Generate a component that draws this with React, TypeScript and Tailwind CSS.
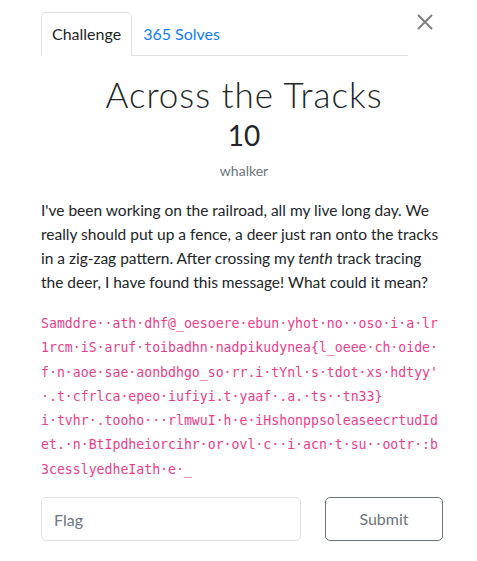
import React from "react";

const codeLines = [
  "Samddre··ath·dhf@_oesoere·ebun·yhot·no··oso·i·a·lr",
  "1rcm·iS·aruf·toibadhn·nadpikudynea{l_oeee·ch·oide·",
  "f·n·aoe·sae·aonbdhgo_so·rr.i·tYnl·s·tdot·xs·hdtyy'",
  "·.t·cfrlca·epeo·iufiyi.t·yaaf·.a.·ts··tn33}",
  "i·tvhr·.tooho···rlmwuI·h·e·iHshonppsoleaseecrtudId",
  "et.·n·BtIpdheiorcihr·or·ovl·c··i·acn·t·su··ootr·:b",
  "3cesslyedheIath·e·_",
];

export default function App() {
  return (
    <div className="w-[477px] h-[561px] bg-white font-['Lato',sans-serif] text-[#212529] overflow-hidden">
      <div className="pl-[41px] pr-[34px] pt-[12px]">
        {/* tabs row */}
        <div className="flex items-start">
          <div className="w-[367px] flex border-b border-[#dee2e6] h-[44px]">
            <div className="h-[44px] px-[10px] flex items-center border border-[#dee2e6] border-b-white rounded-t-[5px] text-[16px] text-[#212529] bg-white">
              Challenge
            </div>
            <div className="h-[44px] px-[11px] flex items-center text-[16px] text-[#117cf7]">
              365 Solves
            </div>
          </div>
          <div className="ml-[9px] mt-[2px] w-[16px] h-[16px]">
            <svg width="16" height="16" viewBox="0 0 16 16">
              <path d="M1 1 L15 15 M15 1 L1 15" stroke="#7f7f7f" strokeWidth="2" fill="none" />
            </svg>
          </div>
        </div>

        {/* title */}
        <div className="text-center pt-[17px] pl-[4px]">
          <h3 className="text-[35px] leading-[42px] font-light tracking-[1px] text-[#212529]">
            Across the Tracks
          </h3>
          <h4 className="text-[28px] leading-[34px] font-normal text-[#212529] mt-[3px]">10</h4>
          <div className="text-[14px] leading-[20px] text-[#6c757d] mt-[9px]">whalker</div>
        </div>

        {/* description */}
        <p className="mt-[17px] w-[402px] text-[15.5px] leading-[24px] text-[#212529]">
          I've been working on the railroad, all my live long day. We really should put up a fence, a deer just ran onto the tracks in a zig-zag pattern. After crossing my <em>tenth</em> track tracing the deer, I have found this message! What could it mean?
        </p>

        {/* code */}
        <div className="mt-[18px] font-['DejaVu_Sans_Mono',monospace] text-[13.2px] leading-[24.3px] text-[#e83e8c] whitespace-pre">
          {codeLines.map((l, i) => (
            <div key={i}>{l}</div>
          ))}
        </div>

        {/* form */}
        <div className="flex mt-[15px]">
          <input
            placeholder="Flag"
            className="w-[260px] h-[44px] border border-[#dee2e6] rounded-[5px] px-[12px] text-[16px] text-[#495057] placeholder:text-[#6c757d] outline-none"
          />
          <button className="ml-[24px] w-[118px] h-[44px] border border-[#6c757d] rounded-[5px] text-[16px] text-[#6c757d] bg-white">
            Submit
          </button>
        </div>
      </div>
    </div>
  );
}
